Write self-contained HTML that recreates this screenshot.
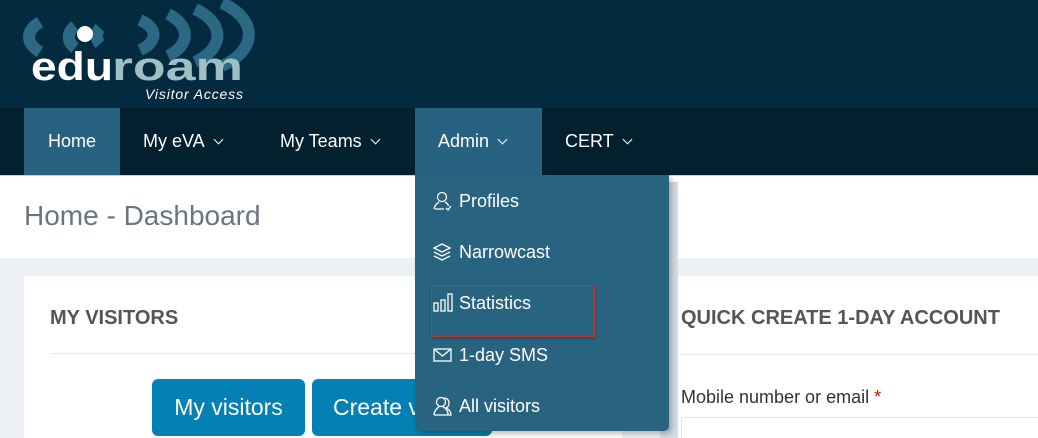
<!DOCTYPE html>
<html><head><meta charset="utf-8"><style>
*{margin:0;padding:0;box-sizing:border-box}
html,body{width:1038px;height:438px;overflow:hidden}
body{background:#edf1f5;font-family:"Liberation Sans",Arial,sans-serif;position:relative}
.hdr{position:absolute;left:0;top:0;width:1038px;height:108px;background:#042a3f}
.nav{position:absolute;left:0;top:108px;width:1038px;height:67px;background:#03202e}
.nav div{position:absolute;top:0;height:67px;line-height:67px;color:#fff;font-size:18px}
.chev{display:inline-block;width:7px;height:7px;border-right:1.3px solid #fff;border-bottom:1.3px solid #fff;transform:rotate(45deg);margin-left:10px;position:relative;top:-4px}
.title{position:absolute;left:0;top:175px;width:1038px;height:83px;background:#fff;border-top:1px solid #c8d2d8}
.title span{position:absolute;left:24px;top:24px;font-size:28px;color:#6b7580}
.panel{position:absolute;top:276px;background:#fff;height:162px}
.h{position:absolute;font-size:20px;font-weight:bold;color:#555}
.btn{position:absolute;top:379px;height:57px;background:#0580b4;border-radius:6px;color:#fff;font-size:23px;line-height:57px;text-align:center}
.dd{position:absolute;left:415px;top:175px;width:254px;height:256px;background:#286380;border-radius:0 0 5px 5px;box-shadow:3px 3px 6px rgba(0,0,0,.25)}
.it{position:absolute;left:18px;color:#fff;font-size:18px;height:24px;line-height:24px}
.it svg{position:absolute;left:0;top:2px}
.it span{position:absolute;left:26px;white-space:nowrap}
</style></head><body>
<div class="hdr">
<svg width="260" height="108" style="position:absolute;left:0;top:0">
<g fill="none" stroke="#2a6884" stroke-width="12">
<path d="M40 22 A60 26 0 0 0 40 52"/>
<path d="M75 26 A30 18 0 0 0 75 48"/>
<path d="M100 28 A18 14 0 0 0 100 44"/>
<path d="M140 20 A40 20 0 0 1 140 50"/>
<path d="M168 14 A50 28 0 0 1 168 56"/>
<path d="M195 9 A60 34 0 0 1 195 62"/>
<path d="M222 3 A70 40 0 0 1 222 66"/>
</g>
<circle cx="85" cy="34" r="8" fill="#fff"/>
<text x="31" y="80" font-family="Liberation Sans" font-weight="bold" font-size="40" fill="#fff" textLength="82" lengthAdjust="spacingAndGlyphs">edu</text>
<text x="112" y="80" font-family="Liberation Sans" font-weight="bold" font-size="40" fill="#9fbfc6" textLength="131" lengthAdjust="spacingAndGlyphs">roam</text>
<text x="145" y="99" font-family="Liberation Sans" font-style="italic" font-size="14" fill="#fff" textLength="98">Visitor Access</text>
</svg>
</div>
<div class="nav">
<div style="left:24px;width:96px;background:#276380;text-align:center">Home</div>
<div style="left:143px">My eVA<i class="chev"></i></div>
<div style="left:280px">My Teams<i class="chev"></i></div>
<div style="left:415px;width:127px;background:#276380;padding-left:23px">Admin<i class="chev"></i></div>
<div style="left:565px">CERT<i class="chev"></i></div>
</div>
<div class="title"><span>Home - Dashboard</span></div>
<div class="panel" style="left:24px;width:598px">
<div class="h" style="left:26px;top:31px">MY VISITORS</div>
<div style="position:absolute;left:26px;right:0;top:77px;border-top:1px solid #e5e8eb"></div>
</div>
<div class="btn" style="left:152px;width:153px">My visitors</div>
<div class="btn" style="left:312px;width:180px;text-align:left;padding-left:21px">Create v</div>
<div class="panel" style="left:660px;width:378px">
<div class="h" style="left:21px;top:31px">QUICK CREATE 1-DAY ACCOUNT</div>
<div style="position:absolute;left:21px;right:0;top:78px;border-top:1px solid #e5e8eb"></div>
<div style="position:absolute;left:21px;top:111px;font-size:18px;color:#333">Mobile number or email <span style="color:#e00">*</span></div>
<div style="position:absolute;left:21px;top:141px;width:360px;height:40px;border:1px solid #e3e6e9"></div>
</div>
<div style="position:absolute;left:660px;top:182px;width:18px;height:256px;background:#d3dde3"></div>
<div class="dd">
<div class="it" style="top:14px"><svg width="20" height="20" fill="none" stroke="#fff" stroke-width="1.3"><circle cx="9" cy="6" r="4.5"/><path d="M1 18c1-5 4-6 5-7M12 11c2 1 3 2 3.5 4M2 18h9M13 17l2 2 3-4"/></svg><span>Profiles</span></div>
<div class="it" style="top:65px"><svg width="20" height="20" fill="none" stroke="#fff" stroke-width="1.3"><path d="M9 2l8 4-8 4-8-4z M1 10l8 4 8-4 M1 14l8 4 8-4"/></svg><span>Narrowcast</span></div>
<div class="it" style="top:116px"><svg width="20" height="20" fill="none" stroke="#fff" stroke-width="1.3"><rect x="1" y="10" width="4" height="8"/><rect x="8" y="7" width="4" height="11"/><rect x="15" y="1" width="4" height="17"/></svg><span>Statistics</span></div>
<div class="it" style="top:168px"><svg width="20" height="20" fill="none" stroke="#fff" stroke-width="1.3"><rect x="1" y="4" width="17" height="12"/><path d="M1 4l8.5 7 8.5-7"/></svg><span>1-day SMS</span></div>
<div class="it" style="top:219px"><svg width="20" height="22" fill="none" stroke="#fff" stroke-width="1.3"><circle cx="8" cy="6" r="4.5"/><path d="M1 19c0-4 3-7 5-8M10 11c3 1 5 4 5 8H1M11 2c3 0 5 2 5 5s-1 4-3 5c3 1 5 4 5 7h-3"/></svg><span>All visitors</span></div>
</div>
<div style="position:absolute;left:431px;top:285px;width:164px;height:52px;border:1px solid #c0392b;box-shadow:0 1px 3px rgba(0,0,0,.3)"></div>
</body></html>
